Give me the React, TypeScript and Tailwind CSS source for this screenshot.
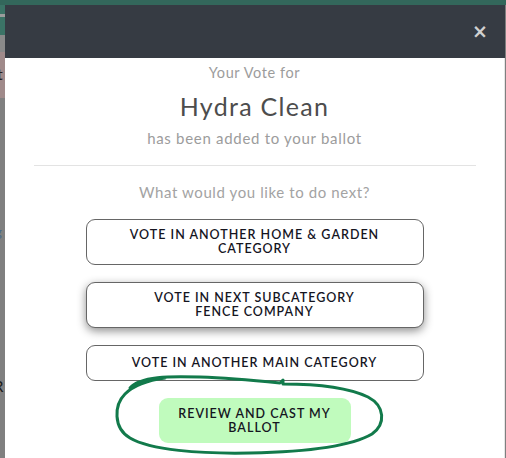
import React from "react";

const font = { fontFamily: "Lato, 'Noto Sans', sans-serif" };

function OutlineButton({ children, shadow, single }: { children: React.ReactNode; shadow?: boolean; single?: boolean }) {
  return (
    <button
      className={
        "w-[338px] rounded-[9px] border border-[#666] bg-white px-4 text-center text-[12.5px] font-semibold uppercase leading-[14px] tracking-[1px] text-[#15151f] " +
        (single ? "py-[10px] " : "py-[8px] ") +
        (shadow ? "shadow-[0_3px_10px_rgba(0,0,0,0.45)]" : "")
      }
    >
      {children}
    </button>
  );
}

export default function App() {
  return (
    <div className="relative h-[458px] w-[506px] overflow-hidden bg-[#7f7f7f]" style={font}>
      <div className="h-[5px] w-full bg-[#33675b]" />
      <div className="flex h-[453px]">
        <div className="flex w-[5px] flex-col overflow-hidden">
          <div className="h-[9px] shrink-0 bg-[#3b7366]" />
          <div className="h-[3px] shrink-0 bg-[#9c9c9c]" />
          <div className="h-[18px] shrink-0 bg-[#3b7366]" />
          <div className="h-[17px] shrink-0 bg-[#8a8a8a]" />
          <div className="relative h-[46px] shrink-0 bg-[#a08a8a]">
            <span className="absolute left-[-3px] top-[14px] text-[16px] leading-none text-[#2a1f1f]">t</span>
          </div>
          <div className="relative flex-1 bg-[#808080]">
            <span className="absolute left-[-5px] top-[128px] text-[13px] leading-none text-[#4a6a8a]">g</span>
            <span className="absolute left-[-6px] top-[281px] text-[15px] leading-none text-[#1a1a1a]">R</span>
          </div>
        </div>
        <div className="flex w-[500px] flex-col">
          <div className="flex h-[53px] shrink-0 items-center justify-end bg-[#363b43] pr-[17px]">
            <span className="text-[19px] font-bold leading-none text-[#d0d0d0]" style={{ fontFamily: "'DejaVu Sans', sans-serif" }}>
              ×
            </span>
          </div>
          <div className="flex flex-1 flex-col items-center border-r border-[#e6e6e6] bg-white">
            <div className="mt-[6px] text-[14.5px] leading-[18px] tracking-[0.6px] text-[#9c9c9c]">Your Vote for</div>
            <div className="mt-[10px] text-[25px] leading-[28px] tracking-[1.3px] text-[#4d4d4d]">Hydra Clean</div>
            <div className="mt-[9px] text-[15px] leading-[18px] tracking-[0.7px] text-[#9c9c9c]">has been added to your ballot</div>
            <div className="mt-[18px] h-px w-[442px] bg-[#e3e3e3]" />
            <div className="mt-[17px] text-[15px] leading-[18px] tracking-[0.6px] text-[#a3a3a3]">What would you like to do next?</div>
            <div className="mt-[18px] flex flex-col items-center gap-[17px]">
              <OutlineButton>
                Vote in another Home &amp; Garden
                <br />
                Category
              </OutlineButton>
              <OutlineButton shadow>
                Vote in next subcategory
                <br />
                Fence Company
              </OutlineButton>
              <OutlineButton single>Vote in another main category</OutlineButton>
              <button className="w-[192px] rounded-[9px] bg-[#c0fbbd] pb-[8px] pt-[9px] text-center text-[12.5px] font-semibold uppercase leading-[14px] tracking-[1px] text-[#15151f]">
                Review and cast my
                <br />
                Ballot
              </button>
            </div>
          </div>
        </div>
      </div>
      <svg
        className="pointer-events-none absolute left-[110px] top-[365px]"
        width={285}
        height={93}
        viewBox="110 365 285 93"
        fill="none"
      >
        <path
          d="M 130 388 C 140 376, 170 376, 200 377 C 230 378, 260 381, 280 383 L 283 380 L 283 384 C 310 384, 345 386, 368 397 C 385 406, 386 424, 372 434 C 350 447, 300 452, 250 453 C 200 454, 150 450, 130 438 C 113 428, 114 405, 125 394 C 135 384, 150 380, 165 378"
          stroke="#127a4b"
          strokeWidth={3}
          strokeLinecap="round"
          strokeLinejoin="round"
        />
      </svg>
    </div>
  );
}
